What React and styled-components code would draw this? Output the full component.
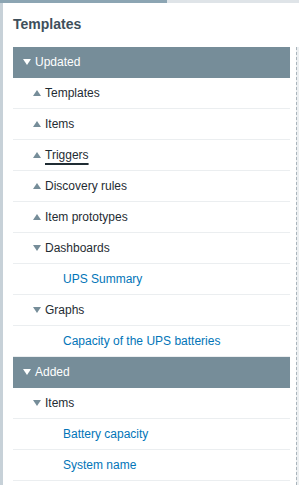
import styled, { createGlobalStyle } from "styled-components";

const GlobalStyle = createGlobalStyle`
  html, body {
    margin: 0;
    padding: 0;
    background: #ffffff;
  }
  body {
    font-family: "Liberation Sans", Arial, sans-serif;
    font-size: 12px;
    color: #1f2c33;
  }
`;

const changes = [
  {
    title: "Updated",
    rows: [
      { label: "Templates", dir: "up" },
      { label: "Items", dir: "up" },
      { label: "Triggers", dir: "up", focused: true },
      { label: "Discovery rules", dir: "up" },
      { label: "Item prototypes", dir: "up" },
      { label: "Dashboards", dir: "down" },
      { label: "UPS Summary", link: true },
      { label: "Graphs", dir: "down" },
      { label: "Capacity of the UPS batteries", link: true },
    ],
  },
  {
    title: "Added",
    rows: [
      { label: "Items", dir: "down" },
      { label: "Battery capacity", link: true },
      { label: "System name", link: true },
    ],
  },
];

export default function App() {
  return (
    <>
      <GlobalStyle />
      <Frame>
        <TabStrip>
          <TabActive />
          <TabRest />
        </TabStrip>
        <Panel>
          <Inner>
            <Title>Templates</Title>
            <Body>
              <Table>
                {changes.map((group) => (
                  <div key={group.title}>
                    <GroupHeader>
                      <Arrow $dir="down" $light />
                      {group.title}
                    </GroupHeader>
                    {group.rows.map((row, i) =>
                      row.link ? (
                        <Row key={i} $indent={50}>
                          <Link>{row.label}</Link>
                        </Row>
                      ) : (
                        <Row key={i} $indent={20}>
                          <Arrow $dir={row.dir} />
                          {row.focused ? <Focused>{row.label}</Focused> : row.label}
                        </Row>
                      )
                    )}
                  </div>
                ))}
              </Table>
              <ScrollGutter />
            </Body>
          </Inner>
        </Panel>
      </Frame>
    </>
  );
}

const Frame = styled.div`
  display: flex;
  flex-direction: column;
  width: 299px;
  height: 485px;
  overflow: hidden;
`;

const TabStrip = styled.div`
  display: flex;
  height: 3px;
  flex: 0 0 3px;
`;

const TabActive = styled.div`
  width: 167px;
  background: #8ca5b3;
`;

const TabRest = styled.div`
  flex: 1;
  background: #dfe4e8;
`;

const Panel = styled.div`
  flex: 1;
  display: flex;
  border-left: 3px solid #c7d1d8;
  background: #ffffff;
`;

const Inner = styled.div`
  flex: 1;
  display: flex;
  flex-direction: column;
  padding-left: 10px;
`;

const Title = styled.h1`
  margin: 0;
  padding: 13px 0 14px;
  font-size: 14px;
  line-height: 17px;
  font-weight: bold;
  color: #3e4f5b;
`;

const Body = styled.div`
  flex: 1;
  display: flex;
`;

const Table = styled.div`
  flex: 0 0 277px;
`;

const ScrollGutter = styled.div`
  flex: 1;
  margin-left: 6px;
  border-left: 1px dashed #aab5bc;
  background: #eceff1;
`;

const GroupHeader = styled.div`
  display: flex;
  align-items: center;
  height: 30px;
  padding-left: 10px;
  background: #768d99;
  color: #ffffff;
  border-bottom: 1px solid #768d99;
`;

const Row = styled.div`
  display: flex;
  align-items: center;
  height: 30px;
  padding-left: ${(p) => p.$indent}px;
  border-bottom: 1px solid #ebeef0;
`;

const Arrow = styled.span`
  width: 0;
  height: 0;
  margin-right: 4px;
  border-left: 4px solid transparent;
  border-right: 4px solid transparent;
  ${(p) =>
    p.$dir === "down"
      ? `border-top: 6px solid ${p.$light ? "#ffffff" : "#768d99"};`
      : `border-bottom: 6px solid ${p.$light ? "#ffffff" : "#768d99"};`}
`;

const Focused = styled.span`
  text-decoration: underline;
  text-decoration-thickness: 2px;
  text-underline-offset: 4px;
  text-decoration-color: #1f2c33;
`;

const Link = styled.span`
  color: #0275b8;
`;
